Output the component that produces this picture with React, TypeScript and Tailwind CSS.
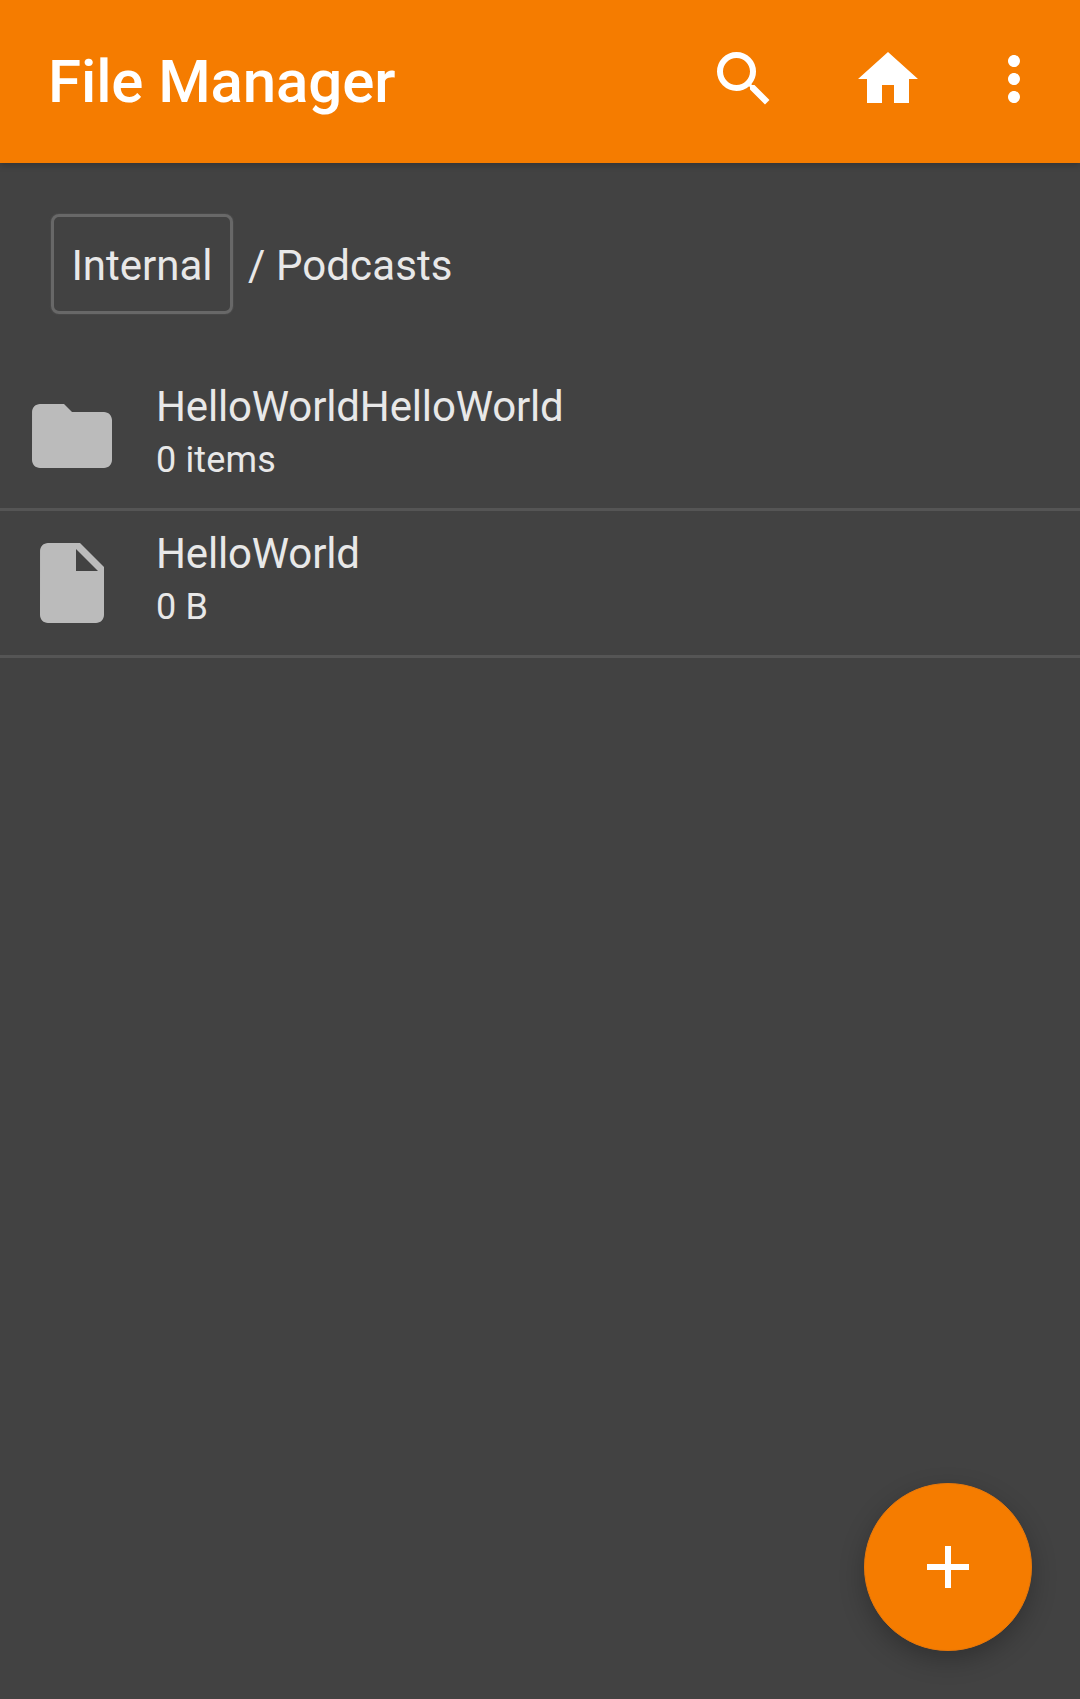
import { MdAdd, MdFolder, MdHome, MdInsertDriveFile, MdMoreVert, MdSearch } from "react-icons/md";

const files = [
  { name: "HelloWorldHelloWorld", info: "0 items", isFolder: true },
  { name: "HelloWorld", info: "0 B", isFolder: false },
];

const App = () => {
  return (
    <div className="relative h-[1699px] w-[1080px] overflow-hidden bg-[#424242] font-['Roboto',sans-serif]">
      <header className="relative z-10 flex h-[163px] items-center bg-[#f57c00] pl-[48px] shadow-[0_3px_6px_rgba(0,0,0,0.2)]">
        <h1 className="flex-1 text-[60px] leading-none font-medium tracking-[-0.1px] text-white">File Manager</h1>
        <div className="flex items-center pr-[30px] pb-[5px] text-white">
          <MdSearch className="mr-[72px] h-[72px] w-[72px]" />
          <MdHome className="mr-[54px] h-[72px] w-[72px]" />
          <MdMoreVert className="h-[72px] w-[72px]" />
        </div>
      </header>

      <div className="flex h-[201px] items-center pl-[51px] text-[42px] text-[#e8e8e8]">
        <div className="flex h-[100px] w-[182px] items-center justify-center rounded-[8px] border-[3px] border-[#686868] pt-[4px] shadow-[0_0_2px_rgba(110,110,110,0.6)]">
          Internal
        </div>
        <span className="ml-[15px] pt-[4px] tracking-[0.1px]">/ Podcasts</span>
      </div>

      <div>
        {files.map((file) => (
          <div key={file.name} className="flex h-[147px] items-center border-b-[3px] border-[#555555]">
            <div className="flex w-[156px] justify-center pr-[12px]">
              {file.isFolder ? (
                <MdFolder className="h-[96px] w-[96px] text-[#bbbbbb]" />
              ) : (
                <MdInsertDriveFile className="h-[96px] w-[96px] text-[#bbbbbb]" />
              )}
            </div>
            <div className="pb-[9px] text-[#e8e8e8]">
              <p className="text-[42px] leading-[56px] tracking-[-0.15px]">{file.name}</p>
              <p className="mt-[1px] text-[36px] leading-[48px] tracking-[0.15px]">{file.info}</p>
            </div>
          </div>
        ))}
      </div>

      <button className="absolute top-[1483px] left-[864px] flex h-[168px] w-[168px] items-center justify-center rounded-full border border-[#e8780a] bg-[#f57c00] text-white shadow-[0_9px_24px_rgba(0,0,0,0.25)]">
        <MdAdd className="h-[72px] w-[72px]" />
      </button>
    </div>
  );
};

export default App;
